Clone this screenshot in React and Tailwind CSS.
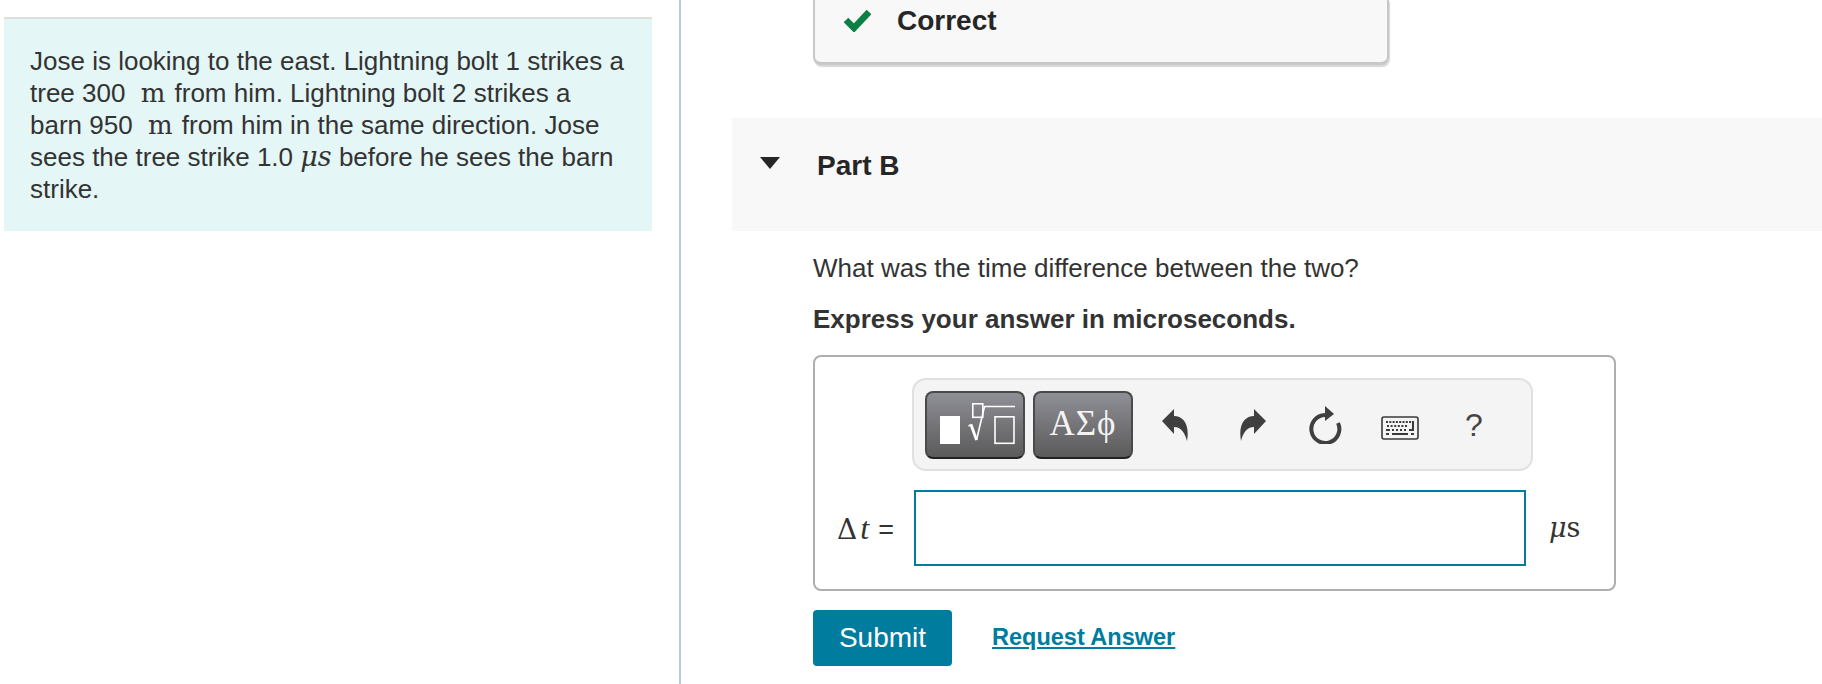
import React from "react";

const sans = "font-['Liberation_Sans',Arial,sans-serif]";

function Reply({ flip = false }) {
  return (
    <svg width="27" height="32" viewBox="0 0 27 32" className={flip ? "-scale-x-100" : ""} fill="#3f3f3f">
      <path d="M0 12 L12 0 L12 7 C21 7 28 15 25 32 C23 24 19 18 12 18 L12 25 Z" />
    </svg>
  );
}

function Restart() {
  return (
    <svg width="34" height="38" viewBox="0 0 34 38" fill="none">
      <path d="M30 17 A14 14 0 1 1 17 9" stroke="#3f3f3f" strokeWidth="4" />
      <path d="M17 0 L26 8 L17 15 Z" fill="#3f3f3f" />
    </svg>
  );
}

function Keyboard() {
  const keys = [];
  for (let i = 0; i < 8; i++) keys.push(<rect key={"a" + i} x={5 + i * 3.3} y="5" width="2" height="2" />);
  for (let i = 0; i < 6; i++) keys.push(<rect key={"b" + i} x={6 + i * 3.6} y="9" width="2" height="2" />);
  return (
    <svg width="38" height="24" viewBox="0 0 38 24" fill="#3a3a3a">
      <rect x="1" y="1" width="36" height="22" rx="2" fill="#f4f4f4" stroke="#3a3a3a" strokeWidth="1.6" />
      {keys}
      <rect x="5" y="13" width="4" height="2" />
      <rect x="11" y="13" width="2" height="2" />
      <rect x="15" y="13" width="2" height="2" />
      <rect x="19" y="13" width="2" height="2" />
      <rect x="23" y="13" width="2" height="2" />
      <path d="M31 5 h2 v10 h-5 v-2 h3 z" />
      <rect x="5" y="17" width="3" height="2" />
      <rect x="11" y="17" width="16" height="2" />
      <rect x="30" y="17" width="3" height="2" />
    </svg>
  );
}

function MathIcon() {
  return (
    <svg width="76" height="44" viewBox="0 0 76 44" fill="none" stroke="#fff">
      <rect x="0" y="13" width="20" height="28" fill="#fff" stroke="none" />
      <rect x="32.8" y="0.8" width="10" height="13.5" strokeWidth="1.6" />
      <path d="M28.5 23 L31.5 21.5" strokeWidth="1.6" />
      <path d="M31 21.5 L36.5 37" strokeWidth="2.8" />
      <path d="M36.5 37 L44.5 3.5 L75 3.5" strokeWidth="1.6" />
      <rect x="55" y="13.8" width="19" height="26.5" strokeWidth="1.6" />
    </svg>
  );
}

const mathM = "ml-[8px] mr-[2px] font-['DejaVu_Serif',serif]";
const mathU = "font-['DejaVu_Serif',serif] text-[27px] italic";

export default function App() {
  return (
    <div className={`flex h-[684px] w-[1822px] overflow-hidden bg-white text-[#333] ${sans}`}>
      <div className="w-[679px] shrink-0 pt-[17px] pl-[4px]">
        <div className="h-[214px] w-[648px] border-t-2 border-[#dedede] bg-[#e4f6f6] pt-[26px] pl-[26px] text-[26px] leading-[32px]">
          <p>Jose is looking to the east. Lightning bolt 1 strikes a</p>
          <p>
            tree 300 <span className={mathM}>m</span> from him. Lightning bolt 2 strikes a
          </p>
          <p>
            barn 950 <span className={mathM}>m</span> from him in the same direction. Jose
          </p>
          <p>
            sees the tree strike 1.0 <span className={mathU}>μs</span> before he sees the barn
          </p>
          <p>strike.</p>
        </div>
      </div>

      <div className="flex-1 border-l-2 border-[#b9c8da] pl-[51px]">
        <div className="ml-[81px] flex h-[65px] w-[576px] items-start rounded-b-lg border-x-2 border-b-[3px] border-[#c8c8c8] bg-[#f8f8f8] pt-[5px] pl-[28px] shadow-[1px_2px_1px_#d8d8d8]">
          <svg width="30" height="24" viewBox="0 0 30 24" className="mt-[3px]" fill="none">
            <path d="M3 12 L11 20 L26 4" stroke="#0a8043" strokeWidth="6.5" strokeLinejoin="miter" />
          </svg>
          <span className="ml-[24px] text-[28px] leading-[32px] font-bold text-[#262626]">Correct</span>
        </div>

        <div className="mt-[53px] flex h-[113px] items-start bg-[#f8f8f8] pt-[32px] pl-[28px]">
          <svg width="20" height="12" viewBox="0 0 20 12" className="mt-[7px]">
            <path d="M0 0 H20 L10 12 Z" fill="#262626" />
          </svg>
          <span className="ml-[37px] text-[28px] leading-[32px] font-bold text-[#262626]">Part B</span>
        </div>

        <div className="pl-[81px]">
          <p className="mt-[21px] text-[26px] leading-[32px]">What was the time difference between the two?</p>
          <p className="mt-[19px] text-[26px] leading-[32px] font-bold">Express your answer in microseconds.</p>

          <div className="mt-[20px] h-[236px] w-[803px] rounded-lg border-2 border-[#aeaeae] pt-[21px]">
            <div className="ml-[97px] flex h-[93px] w-[621px] items-center rounded-[14px] border-2 border-[#e0e0e0] bg-[#f4f4f4] pl-[11px]">
              <div className="flex h-[68px] w-[100px] items-center rounded-lg border-2 border-[#4a4a4a] border-b-[#222] bg-gradient-to-b from-[#8f8f97] to-[#5b5b5b] pl-[13px]">
                <MathIcon />
              </div>
              <div className="ml-[8px] flex h-[68px] w-[100px] items-center justify-center rounded-lg border-2 border-[#4a4a4a] border-b-[#222] bg-gradient-to-b from-[#8f8f97] to-[#5b5b5b] font-['Liberation_Serif',serif] text-[35px] tracking-[1px] text-[#f4f4f4]">
                ΑΣϕ
              </div>
              <div className="ml-[29px] flex items-center">
                <Reply />
              </div>
              <div className="ml-[50px] flex items-center">
                <Reply flip />
              </div>
              <div className="ml-[42px] flex items-center">
                <Restart />
              </div>
              <div className="ml-[39px] mt-[6px] flex items-center">
                <Keyboard />
              </div>
              <span className="ml-[46px] text-[32px] leading-none text-[#444]">?</span>
            </div>

            <div className="mt-[19px] flex h-[76px] items-center">
              <span className="ml-[22px] flex w-[77px] items-baseline whitespace-nowrap font-['DejaVu_Serif',serif] text-[28px]">
                Δ<i className="ml-[3px] font-['Liberation_Serif',serif] text-[32px]">t</i>
                <span className={`ml-[9px] text-[27px] ${sans}`}>=</span>
              </span>
              <div className="h-[76px] w-[612px] border-2 border-[#007c9f] bg-white" />
              <span className="ml-[23px] font-['DejaVu_Serif',serif] text-[27px]">
                <i>μ</i>s
              </span>
            </div>
          </div>

          <div className="mt-[19px] flex items-center">
            <button className="h-[56px] w-[139px] rounded-[4px] bg-[#007c9f] text-[28px] text-white">Submit</button>
            <a href="#" className="ml-[40px] text-[23.5px] font-bold text-[#007c9f] underline">
              Request Answer
            </a>
          </div>
        </div>
      </div>
    </div>
  );
}
